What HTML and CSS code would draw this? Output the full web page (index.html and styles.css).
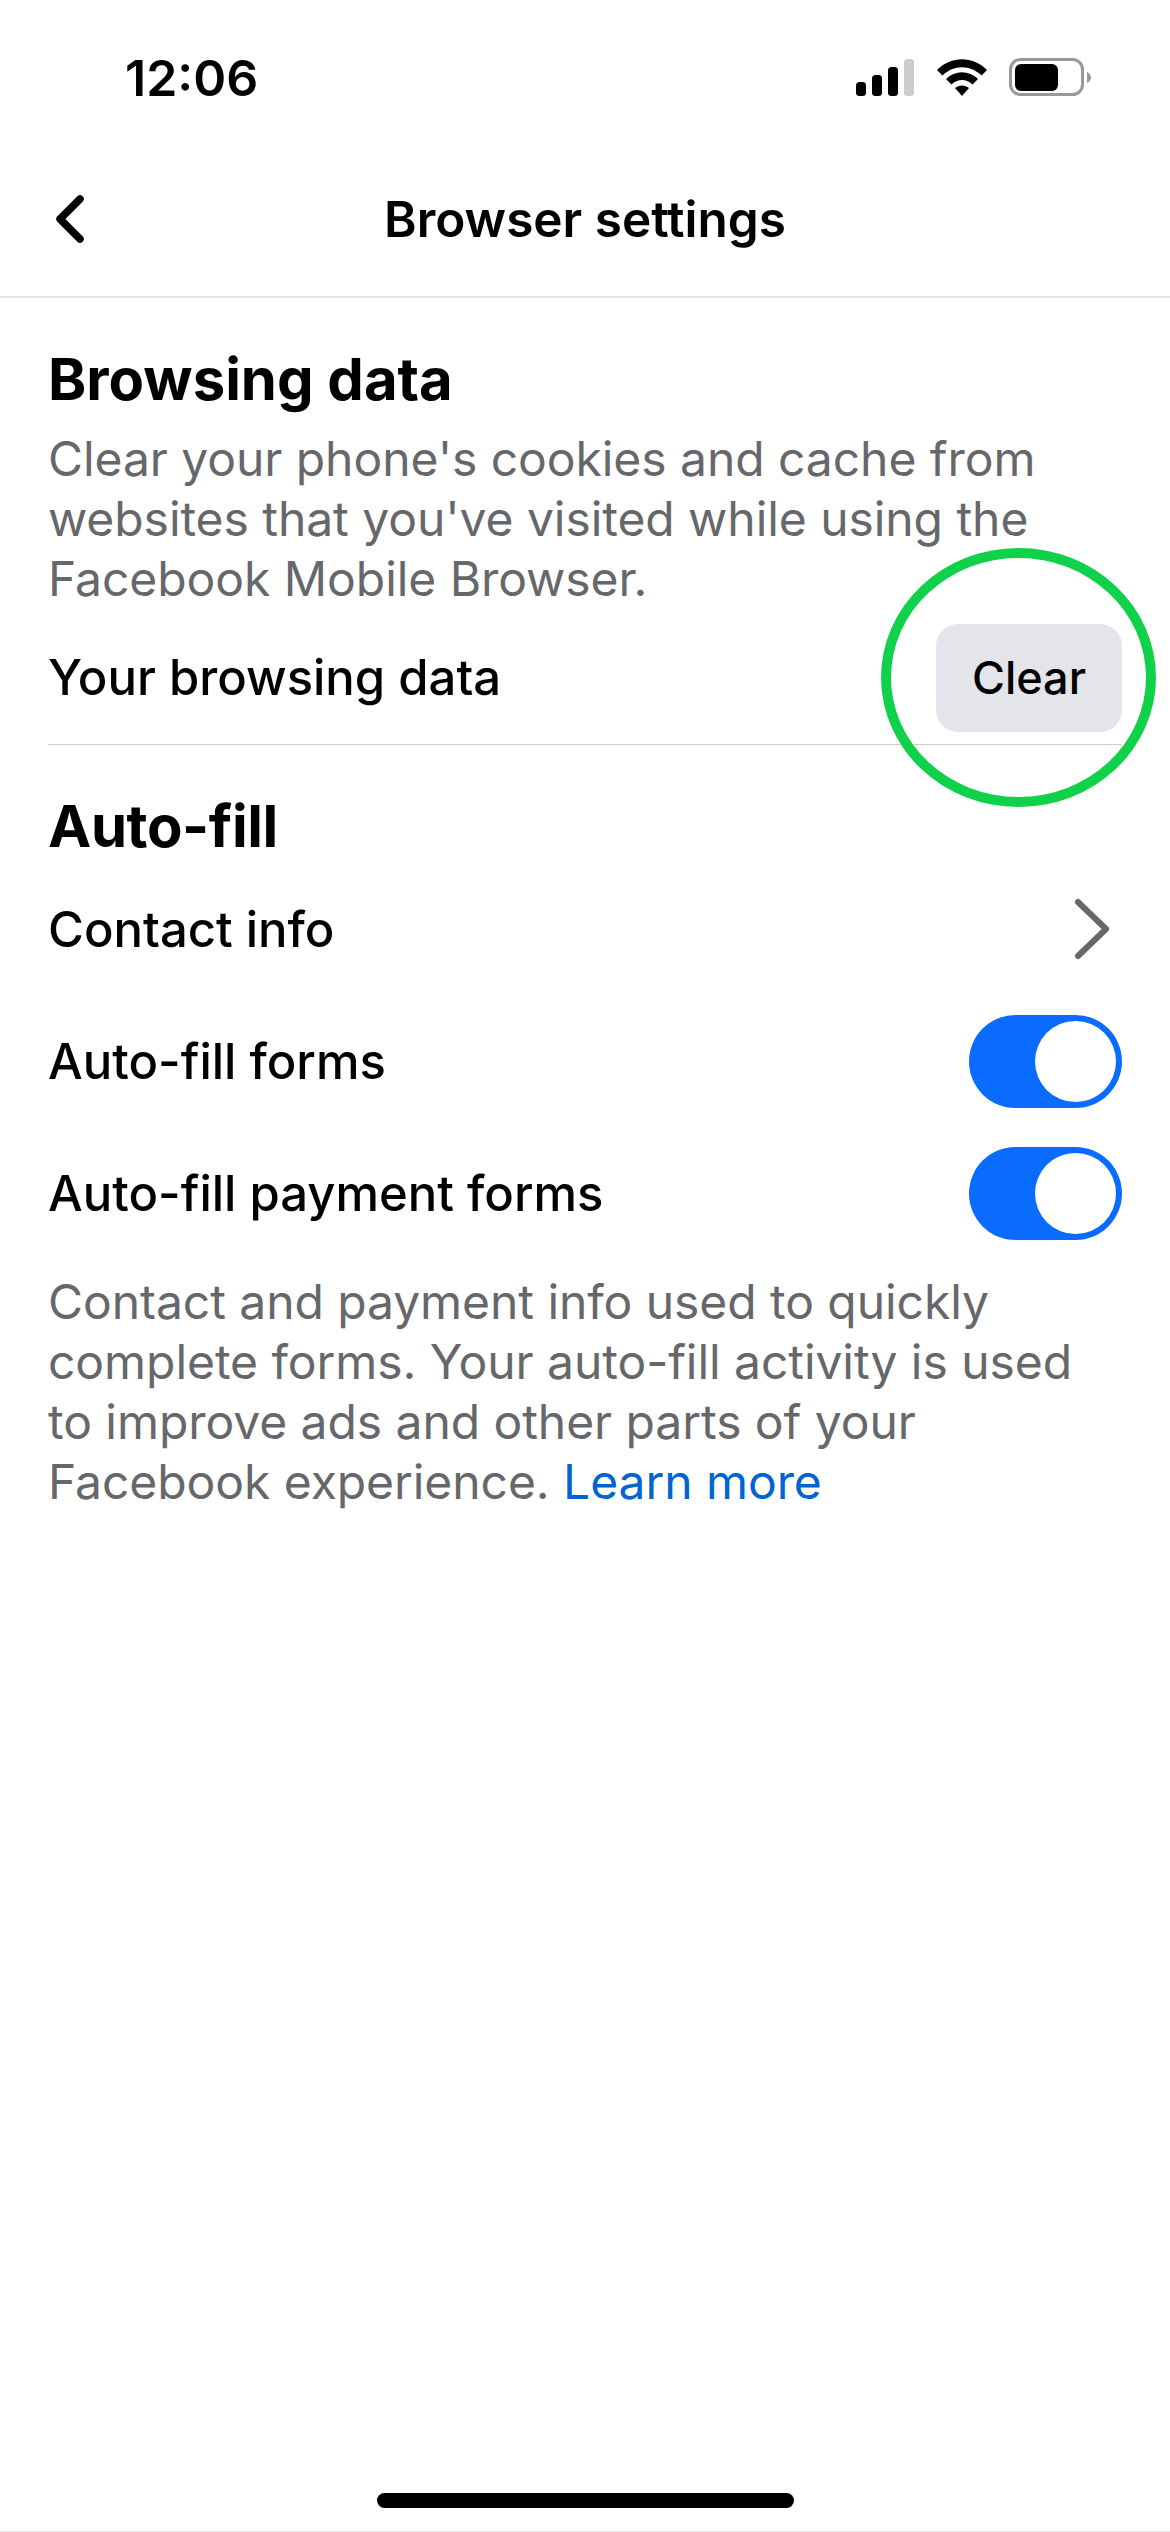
FILE: index.html
```html
<!DOCTYPE html>
<html lang="en">
<head>
  <meta charset="UTF-8" />
  <meta name="viewport" content="width=device-width, initial-scale=1" />
  <title>Browser settings</title>
  <link rel="stylesheet" href="styles.css">
</head>
<body>
  <div class="phone">
    <div class="status-bar">
      <span class="time">12:06</span>
      <div class="status-icons">
        <svg class="signal" width="58" height="37" viewBox="0 0 58 37">
          <rect x="0" y="23" width="10" height="14" rx="3.5" fill="#000"/>
          <rect x="16" y="16" width="10" height="21" rx="3.5" fill="#000"/>
          <rect x="32" y="8" width="10" height="29" rx="3.5" fill="#000"/>
          <rect x="48" y="0" width="10" height="37" rx="3.5" fill="#ccc"/>
        </svg>
        <svg class="wifi" width="50" height="37" viewBox="0 0 50 37">
          <path d="M0 11 C14 -3.500 36 -3.500 50 11 L44.500 16.500 C33.500 5.500 16.500 5.500 5.500 16.500 Z" fill="#000"/>
          <path d="M9 20 C18 11 32 11 41 20 L35.500 25.500 C29.500 19.500 20.500 19.500 14.500 25.500 Z" fill="#000"/>
          <path d="M18 29 C22 25.500 28 25.500 32 29 L25 37 Z" fill="#000"/>
        </svg>
        <svg class="battery" width="82" height="38" viewBox="0 0 82 38">
          <rect x="1.500" y="1.500" width="72" height="35" rx="10" fill="none" stroke="#999" stroke-width="3"/>
          <rect x="6" y="6" width="43" height="27" rx="6" fill="#000"/>
          <path d="M78 14 C80.500 15 82 17 82 19.500 C82 22 80.500 24 78 25 Z" fill="#999"/>
        </svg>
      </div>
    </div>

    <div class="nav-bar">
      <svg class="back" width="28" height="48" viewBox="0 0 28 48">
        <path d="M24 4 L4 24 L24 44" fill="none" stroke="#000" stroke-width="7.500" stroke-linecap="round" stroke-linejoin="round"/>
      </svg>
      <h1 class="nav-title">Browser settings</h1>
    </div>

    <div class="content">
      <h2 class="section-title">Browsing data</h2>
      <p class="note">Clear your phone's cookies and cache from websites that you've visited while using the Facebook Mobile Browser.</p>
      <div class="row row-clear">
        <span>Your browsing data</span>
        <button class="clear-btn">Clear</button>
        <div class="ring"></div>
      </div>

      <h2 class="section-title autofill-title">Auto-fill</h2>
      <div class="row row-toggle">
        <span>Contact info</span>
        <svg class="chevron" width="38" height="64" viewBox="0 0 38 64">
          <path d="M5 5 L33 32 L5 59" fill="none" stroke="#65676b" stroke-width="6" stroke-linecap="round" stroke-linejoin="round"/>
        </svg>
      </div>
      <div class="row row-toggle">
        <span>Auto-fill forms</span>
        <div class="toggle"><div class="knob"></div></div>
      </div>
      <div class="row row-toggle">
        <span>Auto-fill payment forms</span>
        <div class="toggle"><div class="knob"></div></div>
      </div>
      <p class="note note-bottom">Contact and payment info used to quickly complete forms. Your auto-fill activity is used to improve ads and other parts of your Facebook experience. <a class="link">Learn more</a></p>
    </div>

    <div class="home-bar"></div>
  </div>
</body>
</html>
```

FILE: styles.css
```css
* {
  box-sizing: border-box;
}
body {
  margin: 0;
  background: #fff;
  font-family: Inter, "Liberation Sans", sans-serif;
  color: #000;
}
.phone {
  width: 1170px;
  height: 2532px;
  display: flex;
  flex-direction: column;
  overflow: hidden;
  border-bottom: 1px solid #e6e6e6;
}
.status-bar {
  height: 157px;
  padding: 58px 79px 0 125px;
  display: flex;
  justify-content: space-between;
  align-items: flex-start;
}
.time {
  font-size: 50px;
  line-height: 40px;
  font-weight: 600;
}
.status-icons {
  display: flex;
  align-items: flex-start;
}
.signal {
  margin-top: 1px;
}
.wifi {
  margin: 1px 0 0 23px;
}
.battery {
  margin-left: 22px;
}
.nav-bar {
  height: 141px;
  padding-bottom: 16px;
  display: flex;
  align-items: center;
  justify-content: center;
  border-bottom: 2px solid #e6e6e6;
  position: relative;
}
.back {
  position: absolute;
  left: 56px;
  top: 38px;
}
.nav-title {
  margin: 0;
  font-size: 49.5px;
  font-weight: 600;
}
.content {
  padding: 0 48px;
}
.section-title {
  margin: 0;
  font-size: 58px;
  line-height: 72px;
  font-weight: 700;
  padding-top: 45px;
  padding-bottom: 14px;
}
.note {
  margin: 0;
  font-size: 48px;
  line-height: 60px;
  color: #65676b;
  letter-spacing: -0.06px;
}
.row {
  display: flex;
  justify-content: space-between;
  align-items: center;
  font-size: 49px;
  font-weight: 500;
}
.row-clear {
  height: 134px;
  margin-top: 2px;
  border-bottom: 1px solid #ccc;
  position: relative;
}
.clear-btn {
  width: 186px;
  height: 108px;
  border: none;
  border-radius: 22px;
  background: #e4e5ea;
  color: #000;
  font-family: inherit;
  font-size: 45px;
  font-weight: 500;
}
.ring {
  position: absolute;
  left: 833px;
  top: -63px;
  width: 275px;
  height: 259px;
  border: 10px solid #10d24a;
  border-radius: 50%;
}
.autofill-title {
  padding-top: 45px;
  padding-bottom: 1px;
  letter-spacing: -0.4px;
}
.row-toggle {
  height: 132px;
}
.chevron {
  margin-right: 11px;
}
.toggle {
  width: 153px;
  height: 93px;
  padding: 6px;
  border-radius: 47px;
  background: #0a6cff;
  display: flex;
  justify-content: flex-end;
}
.knob {
  width: 81px;
  height: 81px;
  border-radius: 50%;
  background: #fff;
}
.note-bottom {
  padding-top: 13px;
}
.link {
  color: #0064d1;
}
.home-bar {
  position: absolute;
  left: 377px;
  top: 2493px;
  width: 417px;
  height: 15px;
  border-radius: 8px;
  background: #000;
}
```
